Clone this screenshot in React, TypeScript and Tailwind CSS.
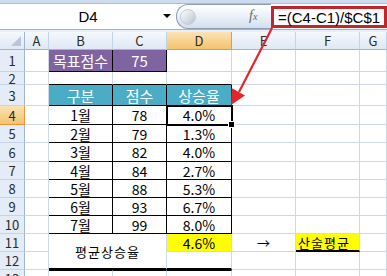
import React from 'react';

const RH = 'flex items-center justify-center bg-[#e4ecf7] border-r border-b border-r-[#9eb6ce] border-b-[#c5d3e6] text-[13px] leading-none text-[#2b2b2b]';
const RHSEL = 'flex items-center justify-center bg-gradient-to-b from-[#fbe3b4] to-[#f3c46c] border-r border-b border-r-[#f29536] border-b-[#f29536] text-[13px] leading-none text-[#2b2b2b]';
const CH = 'flex items-center justify-center bg-gradient-to-b from-[#f5f8fc] to-[#dfe8f4] border-r border-b border-r-[#c5d3e6] border-b-[#9eb6ce] text-[13px] leading-none text-[#2b2b2b]';
const CHSEL = 'flex items-center justify-center bg-gradient-to-b from-[#fbe3b4] to-[#f3c46c] border-r border-b border-r-[#f29536] border-b-[#f29536] text-[13px] leading-none text-[#2b2b2b]';
const C = 'border-r border-b border-[#d0d7e5]';
const T = 'flex items-center justify-center border-r border-b border-black text-[14px] leading-none text-black';
const TH = 'flex items-center justify-center border-r border-b border-black bg-[#4bacc6] text-[15px] leading-none text-white';
const TP = 'flex items-center justify-center border-r border-b border-black bg-[#8064a2] text-[15px] leading-none text-white';

const data: [string, string, string][] = [
  ['1월', '78', '4.0%'],
  ['2월', '79', '1.3%'],
  ['3월', '82', '4.0%'],
  ['4월', '84', '2.7%'],
  ['5월', '88', '5.3%'],
  ['6월', '93', '6.7%'],
  ['7월', '99', '8.0%'],
];

export default function App() {
  return (
    <div className="relative w-[387px] h-[276px] overflow-hidden bg-white font-['Noto_Sans_CJK_KR',sans-serif]">
      {/* formula bar */}
      <div className="flex flex-col h-[32px] bg-[#dbe6f4]">
        <div className="h-[4px] bg-[#cddcef] border-b border-[#a9bfd9]"></div>
        <div className="flex h-[25px] bg-white">
          <div className="relative w-[176px] flex items-center justify-center">
            <span className="text-[15px] leading-none text-black font-['Liberation_Sans',sans-serif]">D4</span>
            <span className="absolute left-[163px] top-[10px] w-0 h-0 border-l-[4px] border-r-[4px] border-t-[4px] border-l-transparent border-r-transparent border-t-black"></span>
          </div>
          <div className="relative w-[95px] flex items-center rounded-l-[12px] border border-r-0 border-[#8d9db3] bg-gradient-to-b from-[#ffffff] via-[#eaf0f8] to-[#d3dfee]">
            <div className="ml-[3px] w-[16px] h-[16px] rounded-full bg-gradient-to-br from-[#ffffff] to-[#b9c3cf] border border-[#c4ccd6]"></div>
            <span className="absolute left-[72px] top-[4px] text-[14px] leading-none italic text-[#666] font-['Liberation_Serif',serif]">f<span className="text-[10px]">x</span></span>
          </div>
          <div className="flex-1 flex items-center h-[22px] mt-[2px] border-[3px] border-[#c0272d] bg-white pl-[4px]">
            <span className="text-[15px] leading-none text-black font-['Liberation_Sans',sans-serif] whitespace-nowrap">=(C4-C1)/$C$1</span>
          </div>
        </div>
        <div className="h-[3px] border-t border-[#a3b3c7] bg-[#e9eff8]"></div>
      </div>

      {/* grid */}
      <div className="grid grid-cols-[25px_24px_64px_54px_65px_64px_64px_27px] grid-rows-[18px_22px_13px_21px_19px_18px_19px_18px_18px_18px_18px_18px_18px_18px]">
        {/* header row */}
        <div className="relative bg-gradient-to-b from-[#f5f8fc] to-[#dfe8f4] border-r border-b border-r-[#9eb6ce] border-b-[#9eb6ce]">
          <span className="absolute right-[3px] bottom-[3px] w-0 h-0" style={{ borderBottom: '10px solid #b7c6da', borderLeft: '10px solid transparent' }}></span>
        </div>
        <div className={CH}>A</div>
        <div className={CH}>B</div>
        <div className={CH}>C</div>
        <div className={CHSEL}>D</div>
        <div className={CH}>E</div>
        <div className={CH}>F</div>
        <div className={CH}>G</div>

        {/* row 1 */}
        <div className={RH}>1</div>
        <div className={C}></div>
        <div className={TP}>목표점수</div>
        <div className={TP}>75</div>
        <div className={C}></div>
        <div className={C}></div>
        <div className={C}></div>
        <div className={C}></div>

        {/* row 2 */}
        <div className={RH}>2</div>
        <div className={C}></div>
        <div className="border-r border-b border-r-[#d0d7e5] border-b-black"></div>
        <div className="border-r border-b border-r-[#d0d7e5] border-b-black"></div>
        <div className="border-r border-b border-r-[#d0d7e5] border-b-black"></div>
        <div className={C}></div>
        <div className={C}></div>
        <div className={C}></div>

        {/* row 3 */}
        <div className={RH}>3</div>
        <div className={C}></div>
        <div className={TH}>구분</div>
        <div className={TH}>점수</div>
        <div className={TH}>상승율</div>
        <div className={C}></div>
        <div className={C}></div>
        <div className={C}></div>

        {data.map((r, i) => (
          <React.Fragment key={i}>
            <div className={i === 0 ? RHSEL : RH}>{i + 4}</div>
            <div className={C}></div>
            <div className={T}>{r[0]}</div>
            <div className={T}>{r[1]}</div>
            <div className={T}>{r[2]}</div>
            <div className={C}></div>
            <div className={C}></div>
            <div className={C}></div>
          </React.Fragment>
        ))}

        {/* row 11 */}
        <div className={RH}>11</div>
        <div className={C}></div>
        <div className="col-span-2 row-span-2 flex items-center justify-center border-r border-r-[#d0d7e5] border-b-2 border-b-black text-[13px] leading-none tracking-[1px] text-black">평균상승율</div>
        <div className="flex items-center justify-center bg-[#ffff00] border-r border-b border-[#d0d7e5] text-[14px] leading-none text-black">4.6%</div>
        <div className="flex items-center justify-center border-r border-b border-[#d0d7e5] text-[13px] leading-none text-black">→</div>
        <div className="flex items-center pl-[2px] bg-[#ffff00] border-r border-r-[#d0d7e5] border-b-2 border-b-black text-[13px] leading-none tracking-[1px] text-black">산술평균</div>
        <div className={C}></div>

        {/* row 12 */}
        <div className={RH}>12</div>
        <div className={C}></div>
        <div className="border-r border-r-[#d0d7e5] border-b-2 border-b-black"></div>
        <div className={C}></div>
        <div className={C}></div>
        <div className={C}></div>

        {/* row 13 */}
        <div className={RH}>13</div>
        <div className={C}></div>
        <div className="border-r border-b border-t border-r-[#d0d7e5] border-b-[#d0d7e5] border-t-black"></div>
        <div className="border-r border-b border-t border-r-[#d0d7e5] border-b-[#d0d7e5] border-t-black"></div>
        <div className="border-r border-b border-t border-r-[#d0d7e5] border-b-[#d0d7e5] border-t-black"></div>
        <div className={C}></div>
        <div className={C}></div>
        <div className={C}></div>
      </div>

      {/* selection on D4 */}
      <div className="absolute left-[166px] top-[105px] w-[67px] h-[21px] border-2 border-black pointer-events-none"></div>
      <div className="absolute left-[228px] top-[121px] w-[7px] h-[7px] bg-black border border-white pointer-events-none"></div>

      {/* red arrow */}
      <svg className="absolute left-0 top-0 pointer-events-none" width="387" height="276" viewBox="0 0 387 276">
        <line x1="272" y1="28" x2="239" y2="92" stroke="#e3262b" strokeWidth="2.2" />
        <polygon points="231,105 231.5,88 245,95.5" fill="#e3262b" />
      </svg>
    </div>
  );
}
